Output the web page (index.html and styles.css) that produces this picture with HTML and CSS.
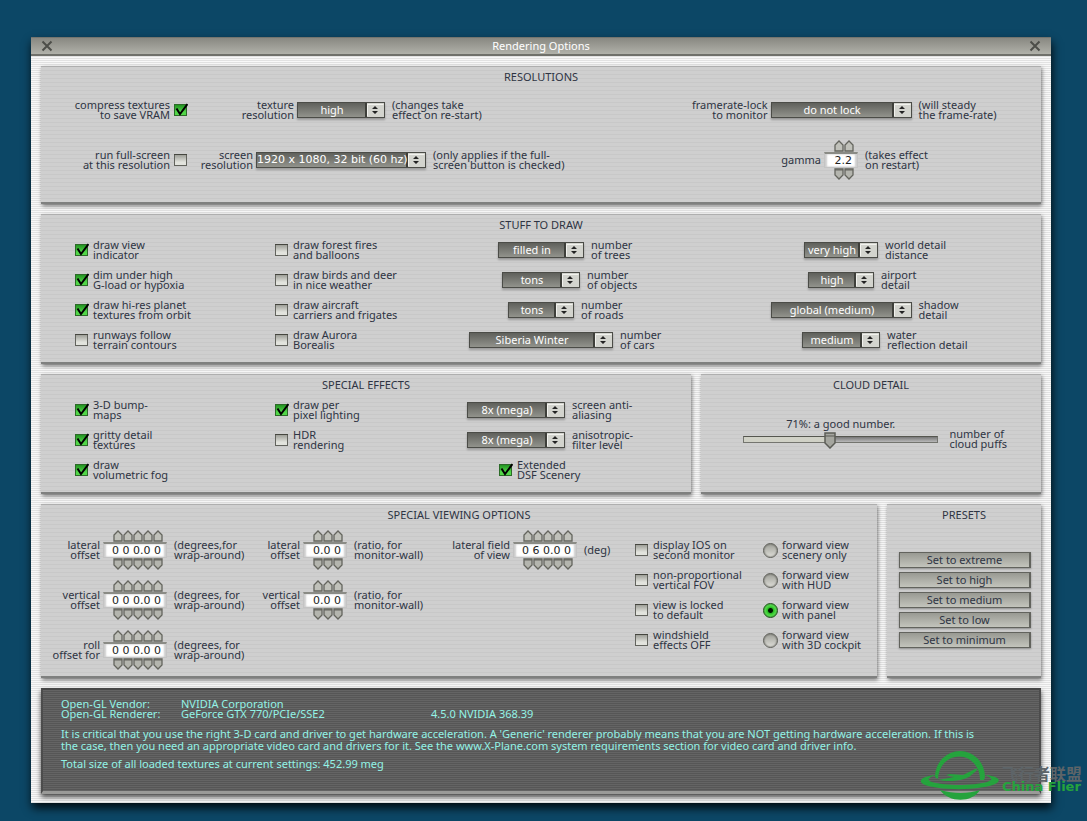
FILE: index.html
```
<!DOCTYPE html>
<html lang="en">
<head>
 <meta charset="UTF-8">
 <meta name="viewport" content="width=device-width, initial-scale=1.0">
 <title>Rendering Options</title>
 <link rel="stylesheet" href="styles.css">
</head>
<body>
 <div class="window">
  <header class="title-bar">
   <button class="close" aria-label="Close"><svg viewBox="0 0 12 12"><path d="M1.5 1.5 L10.5 10.5 M10.5 1.5 L1.5 10.5"/></svg></button>
   <h1>Rendering Options</h1>
   <button class="close" aria-label="Close window"><svg viewBox="0 0 12 12"><path d="M1.5 1.5 L10.5 10.5 M10.5 1.5 L1.5 10.5"/></svg></button>
  </header>

  <main class="content">
   <section class="panel resolutions">
    <h2>RESOLUTIONS</h2>
    <div class="panel-body resolutions-grid">
     <div class="stack tall">
      <label class="check before"><span>compress textures<br>to save VRAM</span><input type="checkbox" checked></label>
      <label class="check before"><span>run full-screen<br>at this resolution</span><input type="checkbox"></label>
     </div>
     <div class="stack tall">
      <div class="field">
       <label for="texRes">texture<br>resolution</label>
       <select id="texRes" class="popup w-88"><option>high</option></select>
       <span>(changes take<br>effect on re-start)</span>
      </div>
      <div class="field">
       <label for="scrRes">screen<br>resolution</label>
       <select id="scrRes" class="popup w-170"><option>1920 x 1080, 32 bit (60 hz)</option></select>
       <span>(only applies if the full-<br>screen button is checked)</span>
      </div>
     </div>
     <div class="stack tall last">
      <div class="field">
       <label for="frameLock">framerate-lock<br>to monitor</label>
       <select id="frameLock" class="popup w-140"><option>do not lock</option></select>
       <span>(will steady<br>the frame-rate)</span>
      </div>
      <div class="field">
       <label for="gamma">gamma</label>
       <div class="spinner" data-digits="2"><input id="gamma" type="text" value="2.2"></div>
       <span>(takes effect<br>on restart)</span>
      </div>
     </div>
    </div>
   </section>

   <section class="panel">
    <h2>STUFF TO DRAW</h2>
    <div class="panel-body stuff-grid">
     <div class="stack">
      <label class="check"><input type="checkbox" checked><span>draw view<br>indicator</span></label>
      <label class="check"><input type="checkbox" checked><span>dim under high<br>G-load or hypoxia</span></label>
      <label class="check"><input type="checkbox" checked><span>draw hi-res planet<br>textures from orbit</span></label>
      <label class="check"><input type="checkbox"><span>runways follow<br>terrain contours</span></label>
     </div>
     <div class="stack">
      <label class="check"><input type="checkbox"><span>draw forest fires<br>and balloons</span></label>
      <label class="check"><input type="checkbox"><span>draw birds and deer<br>in nice weather</span></label>
      <label class="check"><input type="checkbox"><span>draw aircraft<br>carriers and frigates</span></label>
      <label class="check"><input type="checkbox"><span>draw Aurora<br>Borealis</span></label>
     </div>
     <div class="stack">
      <div class="field">
       <select id="trees" class="popup w-86"><option>filled in</option></select>
       <label for="trees">number<br>of trees</label>
      </div>
      <div class="field">
       <select id="objects" class="popup w-78"><option>tons</option></select>
       <label for="objects">number<br>of objects</label>
      </div>
      <div class="field">
       <select id="roads" class="popup w-66"><option>tons</option></select>
       <label for="roads">number<br>of roads</label>
      </div>
      <div class="field">
       <select id="cars" class="popup w-144"><option>Siberia Winter</option></select>
       <label for="cars">number<br>of cars</label>
      </div>
     </div>
     <div class="stack">
      <div class="field">
       <select id="world" class="popup w-74"><option>very high</option></select>
       <label for="world">world detail<br>distance</label>
      </div>
      <div class="field">
       <select id="airport" class="popup w-66"><option>high</option></select>
       <label for="airport">airport<br>detail</label>
      </div>
      <div class="field">
       <select id="shadow" class="popup w-140"><option>global (medium)</option></select>
       <label for="shadow">shadow<br>detail</label>
      </div>
      <div class="field">
       <select id="water" class="popup w-78"><option>medium</option></select>
       <label for="water">water<br>reflection detail</label>
      </div>
     </div>
    </div>
   </section>

   <div class="panel-row">
    <section class="panel effects">
     <h2>SPECIAL EFFECTS</h2>
     <div class="panel-body effects-grid">
      <div class="stack">
       <label class="check"><input type="checkbox" checked><span>3-D bump-<br>maps</span></label>
       <label class="check"><input type="checkbox" checked><span>gritty detail<br>textures</span></label>
       <label class="check"><input type="checkbox" checked><span>draw<br>volumetric fog</span></label>
      </div>
      <div class="stack">
       <label class="check"><input type="checkbox" checked><span>draw per<br>pixel lighting</span></label>
       <label class="check"><input type="checkbox"><span>HDR<br>rendering</span></label>
      </div>
      <div class="stack">
       <div class="field">
        <select id="antiAlias" class="popup w-98"><option>8x (mega)</option></select>
        <label for="antiAlias">screen anti-<br>aliasing</label>
       </div>
       <div class="field">
        <select id="aniso" class="popup w-98"><option>8x (mega)</option></select>
        <label for="aniso">anisotropic-<br>filter level</label>
       </div>
       <label class="check scenery"><input type="checkbox" checked><span>Extended<br>DSF Scenery</span></label>
      </div>
     </div>
    </section>

    <section class="panel clouds">
     <h2>CLOUD DETAIL</h2>
     <div class="slider-row">
      <div class="slider">
       <output for="puffs">71%: a good number.</output>
       <input id="puffs" type="range" min="0" max="100" value="44">
      </div>
      <label for="puffs">number of<br>cloud puffs</label>
     </div>
    </section>
   </div>

   <div class="panel-row">
    <section class="panel viewing">
     <h2>SPECIAL VIEWING OPTIONS</h2>
     <div class="panel-body viewing-grid">
      <div class="stack tall">
       <div class="field">
        <label for="wrapLat">lateral<br>offset</label>
        <div class="spinner" data-digits="5"><input id="wrapLat" type="text" value="0 0 0.0 0"></div>
        <span>(degrees,for<br>wrap-around)</span>
       </div>
       <div class="field">
        <label for="wrapVert">vertical<br>offset</label>
        <div class="spinner" data-digits="5"><input id="wrapVert" type="text" value="0 0 0.0 0"></div>
        <span>(degrees, for<br>wrap-around)</span>
       </div>
       <div class="field">
        <label for="wrapRoll">roll<br>offset for</label>
        <div class="spinner" data-digits="5"><input id="wrapRoll" type="text" value="0 0 0.0 0"></div>
        <span>(degrees, for<br>wrap-around)</span>
       </div>
      </div>
      <div class="stack tall">
       <div class="field">
        <label for="wallLat">lateral<br>offset</label>
        <div class="spinner" data-digits="3"><input id="wallLat" type="text" value="0.0 0"></div>
        <span>(ratio, for<br>monitor-wall)</span>
       </div>
       <div class="field">
        <label for="wallVert">vertical<br>offset</label>
        <div class="spinner" data-digits="3"><input id="wallVert" type="text" value="0.0 0"></div>
        <span>(ratio, for<br>monitor-wall)</span>
       </div>
      </div>
      <div class="stack tall fov">
       <div class="field">
        <label for="fov">lateral field<br>of view</label>
        <div class="spinner" data-digits="5"><input id="fov" type="text" value="0 6 0.0 0"></div>
        <span>(deg)</span>
       </div>
      </div>
      <div class="stack lowered">
       <label class="check"><input type="checkbox"><span>display IOS on<br>second monitor</span></label>
       <label class="check"><input type="checkbox"><span>non-proportional<br>vertical FOV</span></label>
       <label class="check"><input type="checkbox"><span>view is locked<br>to default</span></label>
       <label class="check"><input type="checkbox"><span>windshield<br>effects OFF</span></label>
      </div>
      <div class="stack lowered">
       <label class="check"><input type="radio" name="view"><span>forward view<br>scenery only</span></label>
       <label class="check"><input type="radio" name="view"><span>forward view<br>with HUD</span></label>
       <label class="check"><input type="radio" name="view" checked><span>forward view<br>with panel</span></label>
       <label class="check"><input type="radio" name="view"><span>forward view<br>with 3D cockpit</span></label>
      </div>
     </div>
    </section>

    <section class="panel presets">
     <h2>PRESETS</h2>
     <div class="preset-list">
      <button>Set to extreme</button>
      <button>Set to high</button>
      <button>Set to medium</button>
      <button>Set to low</button>
      <button>Set to minimum</button>
     </div>
    </section>
   </div>

   <section class="info">
    <div class="driver">
     <span>Open-GL Vendor:</span><span>NVIDIA Corporation</span><span></span>
     <span>Open-GL Renderer:</span><span>GeForce GTX 770/PCIe/SSE2</span><span>4.5.0 NVIDIA 368.39</span>
    </div>
    <p>It is critical that you use the right 3-D card and driver to get hardware acceleration. A 'Generic' renderer probably means that you are NOT getting hardware acceleration. If this is<br>the case, then you need an appropriate video card and drivers for it. See the www.X-Plane.com system requirements section for video card and driver info.</p>
    <p>Total size of all loaded textures at current settings: 452.99 meg</p>
   </section>
  </main>
 </div>

 <div class="watermark">
  <svg viewBox="0 0 80 54">
   <path d="M15 28 A25 26 0 0 1 65 28 L64 31 L60 31 A20 22 0 1 0 18 30 Z"/>
   <path d="M16 26 C4 27 -3 31 3 35 C16 42 64 42 77 34 C82 30 76 27 65 26 C73 29 73 31 67 33 C52 37 26 37 12 33 C6 31 9 28 16 26 Z"/>
   <path d="M18 31 L34 28 L26 26 L30 25 L43 26 L55 20 C58 19 58 21 55 23 L49 28 L44 30 C34 33 25 32 18 31 Z"/>
   <path d="M20 41 C34 45 48 45 60 41 C52 54 29 54 20 41 Z"/>
  </svg>
  <div class="brand">
   <span class="brand-cn" lang="zh">飞行者联盟</span>
   <span class="brand-en">China Flier</span>
  </div>
 </div>

 <script>
 // one up and one down arrow for each digit of the value
 document.querySelectorAll('.spinner').forEach(spinner => {
  const input = spinner.querySelector('input');
  const digits = Number(spinner.dataset.digits);
  spinner.style.width = (digits * 10 + 14) + 'px';

  function addArrows(direction, step) {
   const row = document.createElement('div');
   row.className = 'arrows ' + direction;
   for (let i = 0; i < digits; i++) {
    const button = document.createElement('button');
    button.setAttribute('aria-label', direction + ' digit ' + (i + 1));
    button.addEventListener('click', () => stepDigit(i, step));
    row.appendChild(button);
   }
   return row;
  }

  function stepDigit(index, step) {
   let n = -1;
   input.value = input.value.replace(/\d/g, d => {
    n++;
    return n === index ? (Number(d) + step + 10) % 10 : d;
   });
  }

  spinner.prepend(addArrows('up', 1));
  spinner.append(addArrows('down', -1));
 });
 </script>
</body>
</html>
```
FILE: styles.css
```
* {
 box-sizing: border-box;
}

body {
 margin: 0;
 padding: 37px 36px 18px 31px;
 background-color: #0c4766;
 color: #2e3443;
 font-family: "Noto Sans", sans-serif;
 font-size: 11px;
 line-height: 10px;
 position: relative;
}

button, input, select {
 font: inherit;
 color: inherit;
 margin: 0;
 padding: 0;
}

.window {
 background: repeating-linear-gradient(#f8f8f8 0, #f8f8f8 1px, #e2e2e2 1px, #e2e2e2 2px);
 box-shadow: 1px 5px 9px rgba(0, 0, 0, 0.85);
}

.title-bar {
 display: flex;
 justify-content: space-between;
 align-items: center;
 height: 19px;
 padding: 0 10px;
 background: linear-gradient(#888881, #b0b1a9);
 border-top: 1px solid #74756f;
 border-bottom: 2px solid #6f706a;
}

.title-bar h1 {
 margin: 0;
 font-size: 11px;
 font-weight: normal;
 color: #fff;
}

.close {
 width: 12px;
 height: 12px;
 border: none;
 background: none;
}

.close svg {
 display: block;
 fill: none;
 stroke: #4d4e49;
 stroke-width: 2;
}

.content {
 display: flex;
 flex-direction: column;
 gap: 10px;
 padding: 10px 10px 9px;
}

.panel {
 padding-bottom: 12px;
 background: repeating-linear-gradient(#cfcfcf 0, #cfcfcf 3px, #c8c8c8 3px, #c8c8c8 4px);
 border-top: 1px solid #aeaeae;
 border-bottom: 2px solid #7f807f;
 box-shadow: 1px 2px 4px rgba(0, 0, 0, 0.5);
}

.panel h2 {
 margin: 0;
 font-size: 11px;
 font-weight: normal;
 line-height: 20px;
 text-align: center;
}

.panel-row {
 display: flex;
 gap: 10px;
}

.effects {
 flex: 650 1 0;
}

.clouds {
 flex: 340 1 0;
}

.viewing {
 flex: 836 1 0;
 padding-bottom: 6px;
}

.presets {
 flex: 154 1 0;
}

.resolutions {
 padding-bottom: 22px;
}

.panel-body {
 display: grid;
 padding-top: 5px;
 white-space: nowrap;
}

.resolutions .panel-body {
 padding-top: 3px;
}

.resolutions-grid {
 grid-template-columns: 147fr 306fr 187fr 320fr 40fr;
}

.resolutions-grid .last {
 grid-column: 4;
}

.stuff-grid {
 grid-template-columns: 200fr 126fr 280fr 320fr;
 padding-left: 34px;
 padding-right: 40px;
}

.effects-grid {
 grid-template-columns: 200fr 126fr 230fr 60fr;
 padding-left: 34px;
}

.viewing-grid {
 grid-template-columns: 188fr 192fr 214fr 128fr 114fr;
}

.resolutions-grid,
.stuff-grid,
.effects-grid,
.viewing-grid {
 align-items: start;
}

.stack {
 display: grid;
 grid-auto-rows: 20px;
 gap: 10px;
 min-width: 0;
}

.stack.tall {
 grid-auto-rows: 40px;
}

.lowered {
 padding-top: 10px;
}

.fov {
 padding-left: 34px;
}

/* control in the middle, its texts on both sides */
.field {
 display: grid;
 grid-template-columns: minmax(0, 1fr) auto minmax(0, 1fr);
 align-items: center;
}

.field > label:first-child {
 justify-self: end;
 margin-right: 3px;
 text-align: right;
}

.field > :last-child {
 margin-left: 7px;
}

.field > .popup,
.field > .spinner {
 grid-column: 2;
}

.check {
 display: flex;
 align-items: center;
 gap: 4px;
}

.check.before {
 justify-content: flex-end;
 text-align: right;
}

.scenery {
 margin-left: 98px;
}

input[type="checkbox"] {
 appearance: none;
 flex: none;
 width: 14px;
 height: 14px;
 background:
  url("data:image/svg+xml,%3Csvg xmlns='http://www.w3.org/2000/svg' viewBox='0 0 14 14'%3E%3Cdefs%3E%3ClinearGradient id='g' x2='0' y2='1'%3E%3Cstop stop-color='%23999a93'/%3E%3Cstop offset='.7' stop-color='%23e2e3dd'/%3E%3C/linearGradient%3E%3C/defs%3E%3Crect x='.5' y='1.500' width='12' height='11' fill='url(%23g)' stroke='%2362635d'/%3E%3Cpath d='M0 1.500H13' stroke='%2345463f'/%3E%3C/svg%3E") no-repeat;
}

input[type="checkbox"]:checked {
 background:
  url("data:image/svg+xml,%3Csvg xmlns='http://www.w3.org/2000/svg' viewBox='0 0 14 14'%3E%3Cdefs%3E%3ClinearGradient id='g' x2='0' y2='1'%3E%3Cstop stop-color='%231f8f1f'/%3E%3Cstop offset='.7' stop-color='%2352d648'/%3E%3C/linearGradient%3E%3C/defs%3E%3Crect x='.5' y='1.500' width='12' height='11' fill='url(%23g)' stroke='%232c6a28'/%3E%3Cpath d='M2.500 5.500L6 11L13.500 1' fill='none' stroke='%23000' stroke-width='2'/%3E%3C/svg%3E") no-repeat;
}

input[type="radio"] {
 appearance: none;
 flex: none;
 width: 15px;
 height: 15px;
 border: 1px solid #5a5b55;
 border-radius: 50%;
 background: linear-gradient(#9fa099, #deded8);
 box-shadow: inset 0 0 1px 1px rgba(90, 91, 85, 0.4);
}

input[type="radio"]:checked {
 border-color: #1c4f18;
 background: radial-gradient(#001500 0, #001500 2px, #2db827 3px, #4ee545 5px);
}

.popup {
 appearance: none;
 height: 16px;
 border: 1px solid #4b4c47;
 border-radius: 0;
 padding: 0 18px 0 0;
 line-height: 14px;
 color: #fff;
 text-align: center;
 text-align-last: center;
 background:
  url("data:image/svg+xml,%3Csvg xmlns='http://www.w3.org/2000/svg' viewBox='0 0 19 14'%3E%3Crect width='19' height='14' fill='%23d3d4ce'/%3E%3Cpath d='M1 0V14' stroke='%233e3f3a' stroke-width='2'/%3E%3Cpath d='M2.500 13V1.500H18.500' fill='none' stroke='%23f2f2ee'/%3E%3Cpath d='M7 6 L10 3 L13 6 Z M7 8 L10 11 L13 8 Z' fill='%23222'/%3E%3C/svg%3E") right top / 19px 14px no-repeat,
  linear-gradient(#5f605b, #92938c);
 box-shadow: 0 2px 2px rgba(0, 0, 0, 0.25);
}

.w-66 { width: 66px; }
.w-74 { width: 74px; }
.w-78 { width: 78px; }
.w-86 { width: 86px; }
.w-88 { width: 88px; }
.w-98 { width: 98px; }
.w-140 { width: 141px; }
.w-144 { width: 144px; }
.w-170 {
 width: 170px;
 font-family: "DejaVu Sans", sans-serif;
}

.spinner input {
 display: block;
 width: 100%;
 height: 16px;
 padding-right: 5px;
 border: 1px solid #c4c4c4;
 border-top: 2px solid #8a8b85;
 background-color: #fff;
 color: #222;
 font-family: "DejaVu Sans", sans-serif;
 text-align: right;
 box-shadow: inset 2px 0 2px #ccc, inset -2px 0 2px #ccc;
}

.arrows {
 display: flex;
 padding-left: 10px;
}

.arrows button {
 width: 10px;
 height: 12px;
 border: none;
 background: url("data:image/svg+xml,%3Csvg xmlns='http://www.w3.org/2000/svg' viewBox='0 0 10 12'%3E%3Cpath d='M1 11V5L5 1L9 5V11Z' fill='%23c0c1ba' stroke='%2364655e' stroke-width='1.300'/%3E%3C/svg%3E") no-repeat;
}

.arrows.down button {
 background-image: url("data:image/svg+xml,%3Csvg xmlns='http://www.w3.org/2000/svg' viewBox='0 0 10 12'%3E%3Cpath d='M1 1V7L5 11L9 7V1Z' fill='%23b4b5ae' stroke='%2364655e' stroke-width='1.300'/%3E%3Cpath d='M1 2H9' stroke='%2364655e'/%3E%3C/svg%3E");
}

.slider-row {
 display: flex;
 align-items: flex-end;
 gap: 11px;
 padding: 24px 34px 0 42px;
 white-space: nowrap;
}

.slider {
 display: flex;
 flex-direction: column;
 flex-grow: 1;
 text-align: center;
}

.slider input {
 appearance: none;
 width: 100%;
 height: 20px;
 background: none;
}

.slider input::-webkit-slider-runnable-track {
 height: 7px;
 border: 1px solid #74756f;
 border-top-color: #55564f;
 background: linear-gradient(90deg, #d0d1c6 44%, transparent 44%), linear-gradient(#777, #b9b9b9);
}

.slider input::-webkit-slider-thumb {
 appearance: none;
 width: 12px;
 height: 17px;
 margin-top: -5px;
 background: url("data:image/svg+xml,%3Csvg xmlns='http://www.w3.org/2000/svg' viewBox='0 0 12 17'%3E%3Cpath d='M1 1H11V11L6 16L1 11Z' fill='%23a5a69f' stroke='%235c5d57' stroke-width='1.500'/%3E%3Cpath d='M1 4H11' stroke='%235c5d57'/%3E%3C/svg%3E") no-repeat;
}

.preset-list {
 display: flex;
 flex-direction: column;
 gap: 4px;
 padding: 27px 10px 0 12px;
}

.preset-list button {
 height: 16px;
 padding-bottom: 1px;
 border: 1px solid #62635d;
 border-right-width: 2px;
 background: linear-gradient(#989992, #c3c4bc);
 box-shadow: 0 1px 2px rgba(0, 0, 0, 0.3);
}

.info {
 min-height: 106px;
 padding: 9px 18px;
 border: 2px solid #4c4c4c;
 border-top-color: #474747;
 border-bottom: 3px solid #9a9a98;
 background: repeating-linear-gradient(#646464 0, #646464 1px, #565656 1px, #565656 2px);
 box-shadow: 0 3px 5px rgba(0, 0, 0, 0.7);
 color: #93f3e6;
}

.driver {
 display: grid;
 grid-template-columns: 120px 250px auto;
}

.info p {
 margin: 9px 0 0;
 line-height: 12px;
}

.info p + p {
 margin-top: 6px;
}

.watermark {
 position: absolute;
 right: 5px;
 bottom: 18px;
 display: flex;
 align-items: center;
 gap: 2px;
}

.watermark svg {
 width: 80px;
 height: 54px;
 fill: #25a33d;
}

.brand {
 display: flex;
 flex-direction: column;
 padding-top: 8px;
 white-space: nowrap;
}

.brand-cn {
 font-family: "Noto Sans CJK SC", sans-serif;
 font-size: 16px;
 font-weight: bold;
 line-height: 14px;
 color: #5d6468;
}

.brand-en {
 font-family: "DejaVu Sans", sans-serif;
 font-size: 13px;
 font-weight: bold;
 line-height: 14px;
 color: #25a33d;
}
```
